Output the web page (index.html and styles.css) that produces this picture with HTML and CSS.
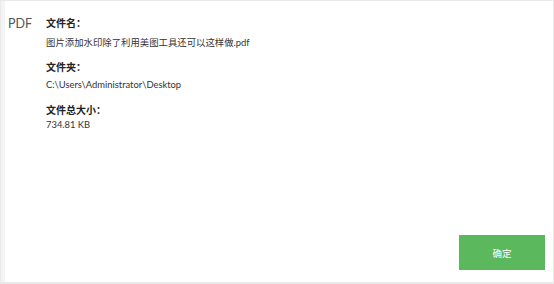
FILE: index.html
```html
<!DOCTYPE html>
<html lang="zh-CN">
<head>
  <meta charset="UTF-8">
  <title>文件信息</title>
  <link rel="stylesheet" href="styles.css">
</head>
<body>
  <div class="dialog">
    <div class="info">
      <div class="file-type">PDF</div>
      <div class="details">
        <div class="item">
          <b class="label">文件名：</b>
          <p class="value">图片添加水印除了利用美图工具还可以这样做.pdf</p>
        </div>
        <div class="item">
          <b class="label">文件夹：</b>
          <p class="value value-path">C:\Users\Administrator\Desktop</p>
        </div>
        <div class="item">
          <b class="label">文件总大小：</b>
          <p class="value value-tight">734.81 KB</p>
        </div>
      </div>
    </div>
    <div class="actions">
      <button class="ok-button">确定</button>
    </div>
  </div>
</body>
</html>
```

FILE: styles.css
```css
body {
  margin: 0;
  font-family: 'Lato', 'Noto Sans CJK SC', sans-serif;
  background-color: #e9e9e9;
  width: 554px;
  height: 284px;
}

.dialog {
  box-sizing: border-box;
  width: 552px;
  height: 281px;
  margin-left: 1px;
  margin-top: 1px;
  background-color: #fff;
  border-left: 4px solid #f4f4f4;
  display: flex;
  flex-direction: column;
  justify-content: space-between;
}

.info {
  display: flex;
  padding: 15px 0 0 3px;
}

.file-type {
  width: 38px;
  font-size: 12.5px;
  color: #555;
  line-height: 16px;
}

.details {
  display: flex;
  flex-direction: column;
  gap: 10px;
}

.label {
  display: block;
  font-size: 10px;
  line-height: 14px;
  color: #222;
}

.value {
  margin: 6px 0 0;
  font-size: 9.4px;
  line-height: 14px;
  color: #333;
}

.value-path {
  margin-top: 4px;
  margin-bottom: 1px;
}

.value-tight {
  margin-top: 1px;
}

.actions {
  display: flex;
  justify-content: flex-end;
  padding: 0 8px 12px 0;
}

.ok-button {
  width: 86px;
  height: 35px;
  border: none;
  background-color: #5cb85c;
  color: #fff;
  font-family: inherit;
  font-size: 9.5px;
  cursor: pointer;
}
```
